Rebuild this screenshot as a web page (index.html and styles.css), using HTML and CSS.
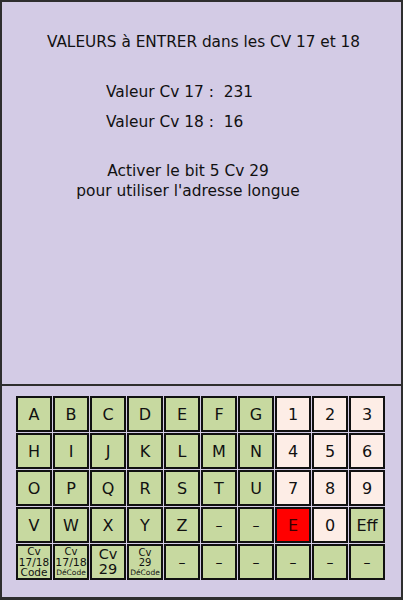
FILE: index.html
```html
<!DOCTYPE html>
<html lang="fr">
<head>
<meta charset="utf-8">
<title>Adresse longue</title>
<link rel="stylesheet" href="styles.css">
</head>
<body>
<div class="frame">
  <section class="info">
    <h1 class="title">VALEURS à ENTRER dans les CV 17 et 18</h1>
    <div class="values">
      <p class="value">Valeur Cv 17 :&nbsp; 231</p>
      <p class="value">Valeur Cv 18 :&nbsp; 16</p>
    </div>
    <p class="note">Activer le bit 5 Cv 29<br>pour utiliser l'adresse longue</p>
  </section>
  <section class="pad">
    <div class="keys">
      <button class="key">A</button>
      <button class="key">B</button>
      <button class="key">C</button>
      <button class="key">D</button>
      <button class="key">E</button>
      <button class="key">F</button>
      <button class="key">G</button>
      <button class="key digit">1</button>
      <button class="key digit">2</button>
      <button class="key digit">3</button>

      <button class="key">H</button>
      <button class="key">I</button>
      <button class="key">J</button>
      <button class="key">K</button>
      <button class="key">L</button>
      <button class="key">M</button>
      <button class="key">N</button>
      <button class="key digit">4</button>
      <button class="key digit">5</button>
      <button class="key digit">6</button>

      <button class="key">O</button>
      <button class="key">P</button>
      <button class="key">Q</button>
      <button class="key">R</button>
      <button class="key">S</button>
      <button class="key">T</button>
      <button class="key">U</button>
      <button class="key digit">7</button>
      <button class="key digit">8</button>
      <button class="key digit">9</button>

      <button class="key">V</button>
      <button class="key">W</button>
      <button class="key">X</button>
      <button class="key">Y</button>
      <button class="key">Z</button>
      <button class="key dash">–</button>
      <button class="key dash">–</button>
      <button class="key enter">E</button>
      <button class="key digit">0</button>
      <button class="key">Eff</button>

      <button class="key multi code"><span>Cv</span><span>17/18</span><span>Code</span></button>
      <button class="key multi decode"><span class="sm">Cv</span><span>17/18</span><span class="xs">DéCode</span></button>
      <button class="key multi big"><span>Cv</span><span>29</span></button>
      <button class="key multi decode29"><span>Cv</span><span>29</span><span class="xs">DéCode</span></button>
      <button class="key dash">–</button>
      <button class="key dash">–</button>
      <button class="key dash">–</button>
      <button class="key dash">–</button>
      <button class="key dash">–</button>
      <button class="key dash">–</button>
    </div>
  </section>
</div>
</body>
</html>
```
FILE: styles.css
```css
html, body {
  margin: 0;
  padding: 0;
  background: #d3cbe5;
}

.frame {
  width: 403px;
  height: 600px;
  box-sizing: border-box;
  border: 2px solid #2e2e2e;
  border-bottom-width: 3px;
  display: flex;
  flex-direction: column;
  background: #d3cbe5;
  font-family: "DejaVu Sans", "Liberation Sans", sans-serif;
  color: #111;
}

/* upper text panel */
.info {
  height: 384px;
  box-sizing: border-box;
  border-bottom: 2px solid #2e2e2e;
  padding-top: 31px;
}

.title {
  margin: 0;
  font-size: 15.3px;
  font-weight: normal;
  line-height: 18px;
  text-align: center;
  padding-left: 4px;
}

.values {
  margin-top: 32px;
  padding-left: 104px;
}

.value {
  margin: 0 0 12px;
  font-size: 15.4px;
  line-height: 18px;
}

.note {
  margin: 30px 0 0;
  width: 372px;
  font-size: 15.4px;
  line-height: 20px;
  text-align: center;
}

/* keypad */
.pad {
  flex: 1;
  padding: 10px 0 0 14px;
}

.keys {
  display: grid;
  grid-template-columns: repeat(10, 36px);
  grid-auto-rows: 36px;
  gap: 1px;
}

.key {
  margin: 0;
  padding: 0;
  box-sizing: border-box;
  border: 2px solid #111;
  background: #c7d9a0;
  font-family: "DejaVu Sans", "Liberation Sans", sans-serif;
  font-size: 16px;
  color: #111;
  display: flex;
  align-items: center;
  justify-content: center;
  overflow: visible;
  white-space: nowrap;
}

.digit {
  background: #fdede6;
}

.enter {
  background: #ff0000;
  color: #3a0000;
}

.dash {
  font-size: 14px;
}

.multi {
  flex-direction: column;
  line-height: 1;
}

.code span {
  font-size: 10.5px;
  line-height: 10.5px;
}

.decode span {
  font-size: 11px;
  line-height: 11px;
}

.decode .sm {
  font-size: 10px;
  line-height: 10px;
}

.big span {
  font-size: 14.5px;
  line-height: 15px;
}

.decode29 span {
  font-size: 10px;
  line-height: 10px;
}

.multi .xs {
  font-size: 7.5px;
  line-height: 9px;
}
```
